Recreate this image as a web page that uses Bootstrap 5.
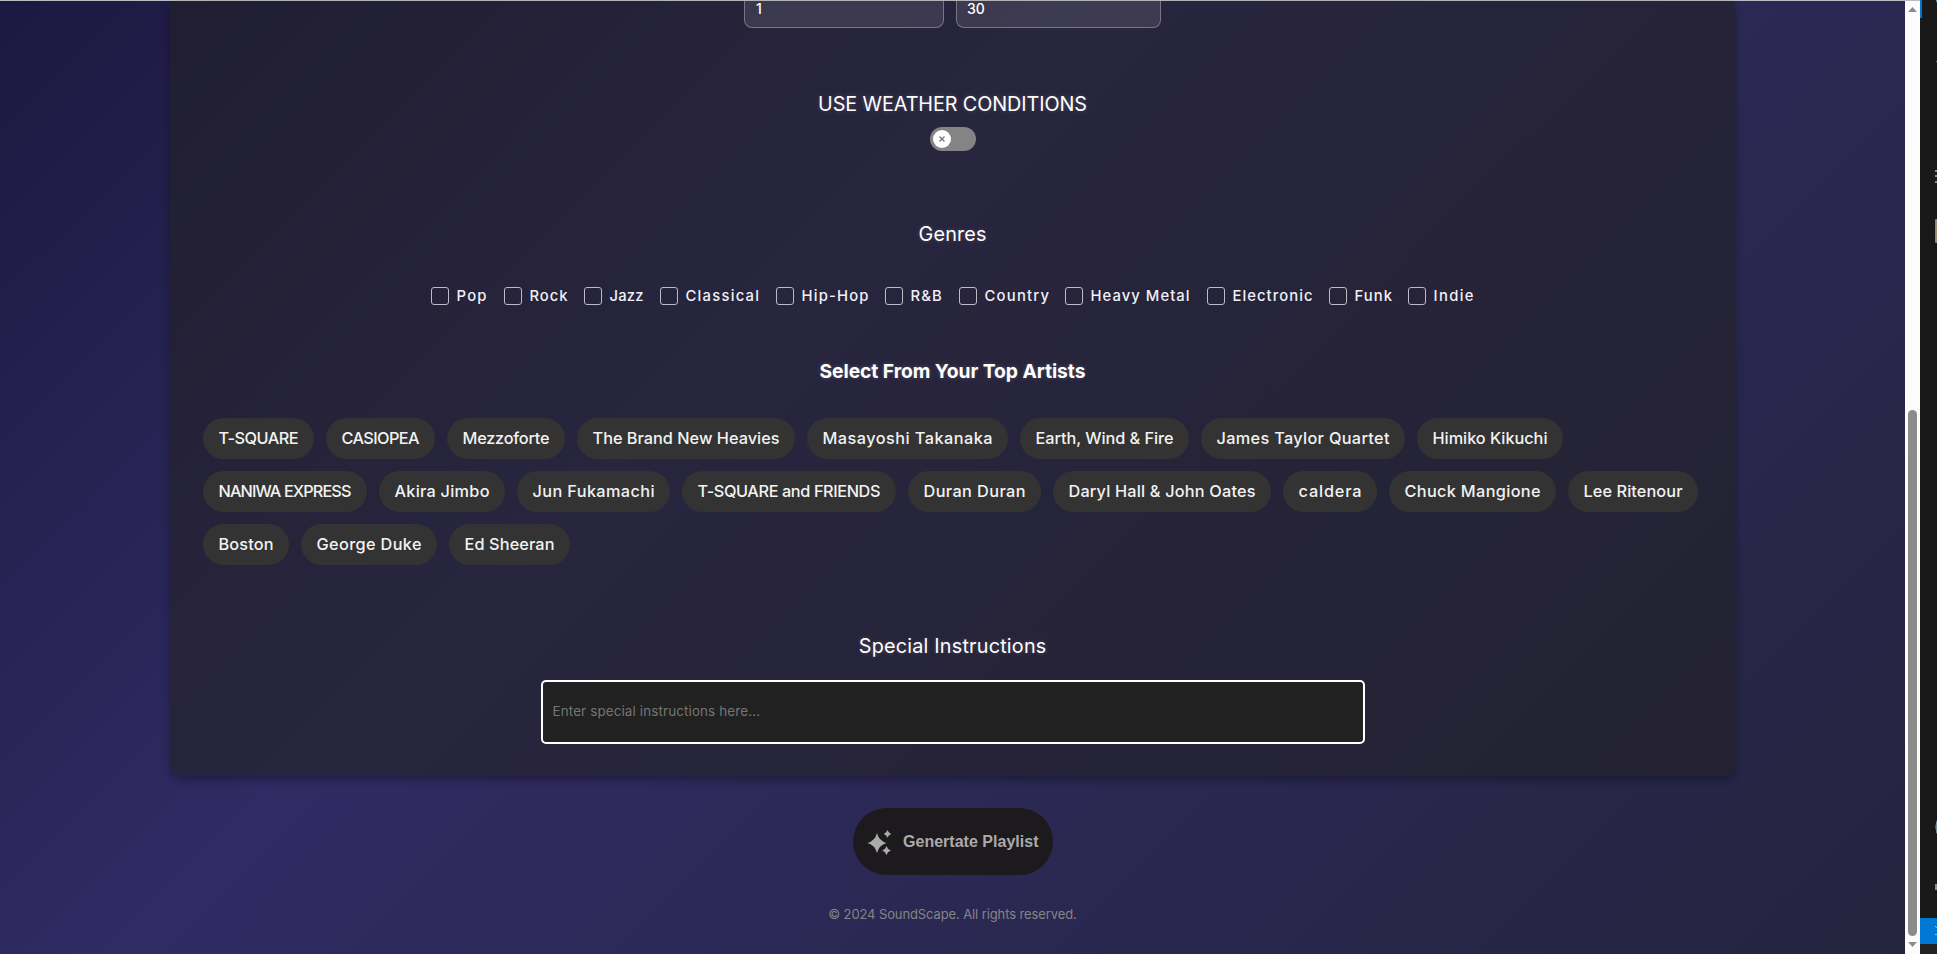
<!DOCTYPE html>
<html lang="en">
<head>
<meta charset="utf-8">
<title>SoundScape</title>
<link href="https://cdn.jsdelivr.net/npm/bootstrap@5.3.0/dist/css/bootstrap.min.css" rel="stylesheet">
<style>
body{height:100vh;overflow:hidden;background:#191919;font-family:Inter,"Open Sans",sans-serif;color:#fff}
.page{width:1905px;height:954px;border-top:1px solid #b9bcc0;background:linear-gradient(135deg,#0f0c29,#302b63,#24243e) left bottom/1905px 1669px no-repeat}
.panel{width:1565px;height:775px;margin-left:170px;padding:0 33px;background:rgba(34,32,36,.58);border-radius:0 0 10px 10px;box-shadow:0 4px 8px rgba(0,0,0,.3)}
.numbers{gap:12px;height:27px}
.num{height:27px;border:1px solid rgba(255,255,255,.3);border-top:0;border-radius:0 0 8px 8px;background:rgba(255,255,255,.1);font:500 14px/16px Inter,sans-serif;padding-left:11px}
.num span{margin-left:-1px}
.title{font-size:19.8px;font-weight:400;line-height:30px;height:30px;margin-bottom:0;text-align:center;white-space:nowrap;text-shadow:0 0 4px rgba(255,255,255,.2)}
.toggle{width:46px;height:24px;border-radius:12px;background:#848484;padding:3px;margin-top:8px}
.knob{width:18px;height:18px;background:#fff}
.genres{margin:38px 0 0 228px;height:18px}
.genre{font-size:14.8px;font-weight:500;line-height:18px;white-space:nowrap;color:#f1f1f4}
.box{width:18px;height:18px;border:1px solid #bdbbc8;border-radius:3px;margin-right:7.5px;flex:none}
.chips{gap:12px;margin-top:32px}
.chip{height:41px;border-radius:20.5px;background:#333;font-size:16.3px;font-weight:500;line-height:41px;white-space:nowrap;color:#f2f2f2}
.notes{width:824px;height:64px;border:2px solid #fff;border-radius:5px;background:#212121;color:#757575;font-size:13.4px;line-height:59px;padding-left:10px;margin-top:19px}
.go{width:200px;height:67px;border-radius:33.5px;background:#1d1a1d;color:#aaa;font:bold 16px/67px "Liberation Sans",Arial,sans-serif;border:0;margin-top:32px;padding:0 0 0 13px;white-space:nowrap}
.foot{font:400 13px/20px Inter,sans-serif;color:#858585;margin-top:29px;height:20px}
.track{width:15px;height:954px;background:#fcfcfc;border-top:1px solid #b9bcc0}
.thumb{width:9px;height:526px;border-radius:5px;background:#8b8b8b;margin-top:398px}
.side{width:17px;height:954px;background:#191919}
</style>
</head>
<body class="d-flex">
<main class="page">
  <section class="panel">
    <div class="numbers d-flex justify-content-center">
      <div class="num" style="width:200px">1</div><div class="num" style="width:205px"><span>30</span></div>
    </div>
    <h2 class="title" style="margin-top:61px"><span data-w="269">USE WEATHER CONDITIONS</span></h2>
    <div class="toggle mx-auto"><div class="knob rounded-circle d-flex align-items-center justify-content-center"><svg width="6" height="6" viewBox="0 0 6 6" stroke="#777" stroke-width="1.4"><path d="M.5.5l5 5M5.5.5l-5 5"/></svg></div></div>
    <h2 class="title" style="margin-top:68px"><span data-w="68">Genres</span></h2>
    <div class="genres d-flex" id="genres"></div>
    <h2 class="title fw-bold" style="margin-top:51px;font-size:19.3px"><span data-w="266">Select From Your Top Artists</span></h2>
    <div class="chips d-flex flex-wrap" id="chips"></div>
    <h2 class="title" style="margin-top:66px"><span data-w="187.5">Special Instructions</span></h2>
    <div class="notes mx-auto"><span data-w="207.5">Enter special instructions here...</span></div>
  </section>
  <button class="go d-flex align-items-center mx-auto" type="button">
    <svg width="26" height="26" viewBox="0 0 26 26" fill="#aaa"><path d="M11 4q1.900 7.700 9.500 10q-7.600 2.300-9.500 10q-1.900-7.700-9.500-10q7.600-2.300 9.500-10z"/><path d="M21.500 1q.9 3 3.700 3.900q-2.800.9-3.700 3.900q-.9-3-3.700-3.900q2.800-.9 3.700-3.900zM20.500 17q1 3.500 4.300 4.500q-3.300 1-4.300 4.500q-1-3.500-4.300-4.500q3.300-1 4.300-4.500z"/></svg>
    <span data-w="135.5" style="margin-left:11.500px">Genertate Playlist</span>
  </button>
  <footer class="foot text-center"><span data-w="248.5">© 2024 SoundScape. All rights reserved.</span></footer>
</main>
<div class="track d-flex flex-column align-items-center">
  <svg width="9" height="5" viewBox="0 0 9 5" fill="#8b8b8b" style="margin-top:6px"><path d="M0 5L4.500 0L9 5z"/></svg>
  <div class="thumb"></div>
  <svg width="9" height="5" viewBox="0 0 9 5" fill="#8b8b8b" style="margin-top:6px"><path d="M0 0h9L4.500 5z"/></svg>
</div>
<aside class="side">
  <svg width="17" height="954" viewBox="0 0 17 954">
    <path fill="#0078d4" d="M0 0h2v18H0zM0 918h17v26H0z"/>
    <path fill="#252222" d="M0 944h17v10H0z"/>
    <path fill="#4a90c8" d="M16 0h1v2h-1zM16 61h1v1h-1z"/>
    <path fill="#8a8f96" d="M15 170h2v2h-2zM15 175h2v2h-2zM15 181h2v2h-2z"/>
    <path fill="#998c70" d="M16 220h1v22h-1zM16 822h1v11h-1z"/>
    <path fill="none" stroke="#5a8fc0" d="M17 219.500h-1.500v23H17M17 820.500q-2.500 6 0 13"/>
    <path fill="#8c8c8c" d="M15 884h2v6h-2z"/>
    <path fill="#8fc4ee" d="M15 926h1v1h-1zM16 927h1v1h-1zM15 934h2v1h-2z"/>
  </svg>
</aside>
<script src="https://cdn.jsdelivr.net/npm/bootstrap@5.3.0/dist/js/bootstrap.bundle.min.js"></script>
<script>
// genre: name, cell width, label width
const genres=[["Pop",73,30],["Rock",80,38],["Jazz",76,34],["Classical",116,73.5],["Hip-Hop",109,67],["R&B",74,31.3],["Country",106,64.5],["Heavy Metal",142,99],["Electronic",122,80],["Funk",79,37.5],["Indie",70,40]];
// artist: name, pill width
const artists=[["T-SQUARE",111],["CASIOPEA",109],["Mezzoforte",118],["The Brand New Heavies",218],["Masayoshi Takanaka",201],["Earth, Wind & Fire",169],["James Taylor Quartet",204],["Himiko Kikuchi",146],["NANIWA EXPRESS",164],["Akira Jimbo",126],["Jun Fukamachi",153],["T-SQUARE and FRIENDS",214],["Duran Duran",133],["Daryl Hall & John Oates",218],["caldera",94],["Chuck Mangione",167],["Lee Ritenour",130],["Boston",86],["George Duke",136],["Ed Sheeran",121]];
const esc=s=>s.replace(/&/g,"&amp;");
document.getElementById("genres").innerHTML=genres.map(g=>`<label class="genre d-flex" style="width:${g[1]}px"><span class="box"></span><span data-w="${g[2]}">${esc(g[0])}</span></label>`).join("");
document.getElementById("chips").innerHTML=artists.map(a=>`<div class="chip text-center" style="width:${a[1]}px"><span data-w="${a[1]-31}">${esc(a[0])}</span></div>`).join("");
// justify each label to its set width through tracking
document.querySelectorAll("[data-w]").forEach(e=>{
  const n=e.textContent.length-1, s=(e.dataset.w-e.getBoundingClientRect().width)/n;
  e.style.letterSpacing=s+"px"; e.style.marginRight=-s+"px";
});
</script>
</body>
</html>
